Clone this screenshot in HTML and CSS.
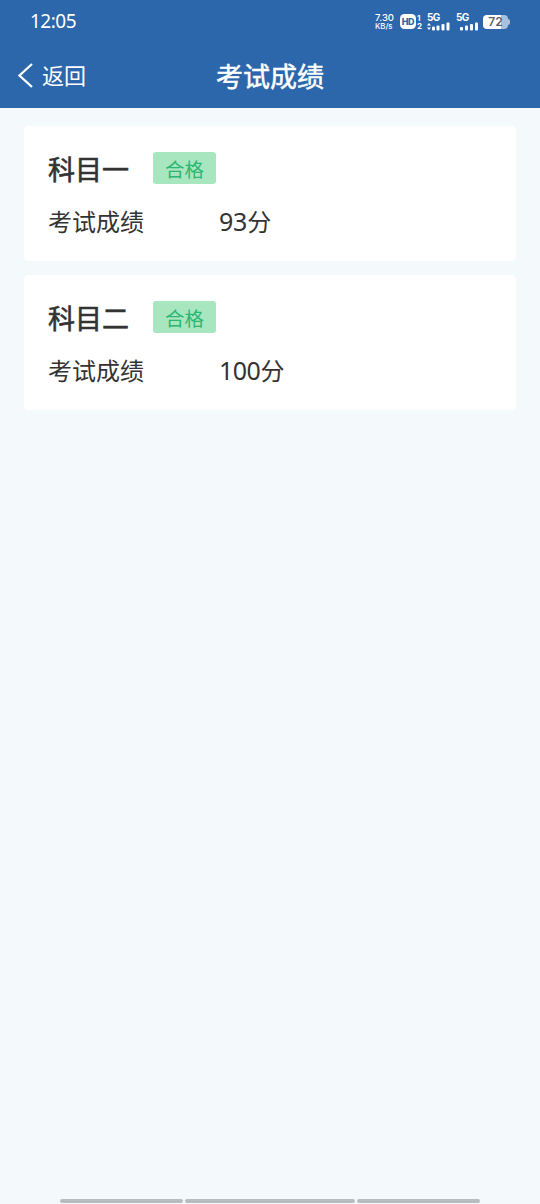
FILE: index.html
```html
<!DOCTYPE html>
<html lang="zh-CN">
<head>
<meta charset="utf-8">
<title>考试成绩</title>
<link rel="stylesheet" href="styles.css">
</head>
<body>
<div class="screen">
  <header class="header">
    <div class="status">
      <span class="time">12:05</span>
      <div class="indicators">
        <div class="speed"><span class="rate">7.30</span><span class="unit">KB/s</span></div>
        <div class="hd"><span class="hd-box">HD</span><span class="sims"><span>1</span><span>2</span></span></div>
        <div class="signal">
          <span class="net">5G</span>
          <svg width="24" height="9" viewBox="0 0 24 9" fill="#fff"><path d="M0 3.600 2 1l2 2.600zM0 5.400 2 8l2-2.600z"/><rect x="5" y="4.500" width="3" height="4" rx="1"/><rect x="9.500" y="3.500" width="3" height="5" rx="1"/><rect x="14.500" y="2" width="3" height="6.500" rx="1"/><rect x="19.500" y=".5" width="3" height="8" rx="1"/></svg>
        </div>
        <div class="signal second">
          <span class="net">5G</span>
          <svg width="24" height="9" viewBox="0 0 24 9" fill="#fff"><rect x="4" y="5" width="3" height="3.500" rx="1"/><rect x="9" y="3.500" width="3" height="5" rx="1"/><rect x="14" y="2" width="3" height="6.500" rx="1"/><rect x="19" y=".5" width="3" height="8" rx="1"/></svg>
        </div>
        <div class="battery"><span class="level">72</span><span class="tip"></span></div>
      </div>
    </div>
    <nav class="nav">
      <a class="back"><svg width="18" height="28" viewBox="0 0 18 28" fill="none" stroke="#fff" stroke-width="2.300"><path d="M15 2 2.500 13.500 15 25"/></svg><span class="back-text">返回</span></a>
      <h1 class="title">考试成绩</h1>
    </nav>
  </header>
  <main class="list">
    <section class="card">
      <div class="subject"><h2 class="name">科目一</h2><span class="tag">合格</span></div>
      <div class="result"><span class="label">考试成绩</span><span class="score">93<span class="fen">分</span></span></div>
    </section>
    <section class="card">
      <div class="subject"><h2 class="name">科目二</h2><span class="tag">合格</span></div>
      <div class="result"><span class="label">考试成绩</span><span class="score hundred">100<span class="fen">分</span></span></div>
    </section>
  </main>
  <footer class="gestures"><span class="bar"></span><span class="bar middle"></span><span class="bar"></span></footer>
</div>
</body>
</html>
```
FILE: styles.css
```css
* { box-sizing: border-box; }
body { margin: 0; font-family: "Noto Sans", "Noto Sans CJK SC", sans-serif; }
h1, h2 { margin: 0; }
svg { display: block; }
.screen { width: 540px; height: 1204px; display: flex; flex-direction: column; background: #f4f9fb; overflow: hidden; }
.header { height: 108px; background: #2c66ab; color: #fff; }
.status { height: 43px; padding: 0 30px; display: flex; align-items: center; justify-content: space-between; }
.time { font-size: 19px; line-height: 24px; letter-spacing: -.5px; padding-bottom: 1px; }
.indicators { display: flex; align-items: center; height: 20px; }
.speed { width: 25px; display: flex; flex-direction: column; font: 500 9.5px/9px Inter, sans-serif; }
.unit { font-size: 7.8px; line-height: 8px; }
.hd { width: 26px; display: flex; align-items: center; gap: 1px; }
.hd-box { width: 16px; height: 15px; border-radius: 4.5px; background: #fff; color: #2c66ab; font: 800 9px/15px Inter, sans-serif; text-align: center; letter-spacing: -.3px; }
.sims { display: flex; flex-direction: column; font: 700 8px/8px Inter, sans-serif; }
.signal { width: 29px; height: 18px; padding-left: 1px; }
.net { display: block; height: 9px; font: 700 10px/9px Inter, sans-serif; letter-spacing: -.6px; }
.second { width: 28px; }
.battery { display: flex; align-items: center; }
.level { width: 25px; height: 14px; border-radius: 4px; background: linear-gradient(90deg, #fff 72%, #a9c1de 72%); color: #575f68; font: 600 12px/14px Inter, sans-serif; text-align: center; }
.tip { width: 2px; height: 6px; border-radius: 0 2px 2px 0; background: #a9c1de; }
.nav { height: 65px; padding: 0 17px; display: grid; grid-template-columns: 1fr auto 1fr; align-items: center; }
.back { display: flex; align-items: center; gap: 7px; font: 22px/32px "Noto Sans CJK SC", sans-serif; }
.back-text { padding-bottom: 3px; }
.title { font: 400 27px/36px "Noto Sans CJK SC", sans-serif; -webkit-text-stroke: .5px #fff; }
.list { flex: 1; padding: 18px 24px; display: flex; flex-direction: column; gap: 14px; }
.card { height: 135px; padding: 26px 24px; border-radius: 5px; background: #fff; color: #333; }
.subject { height: 32px; display: flex; align-items: center; gap: 24px; }
.name { padding-top: 2px; font: 400 27px/32px "Noto Sans CJK SC", sans-serif; -webkit-text-stroke: .6px #333; }
.tag { width: 63px; height: 32px; border-radius: 3px; background: #a8e6c0; color: #2bb673; font: 19.5px/33px "Noto Sans CJK SC", sans-serif; text-align: center; }
.result { display: flex; align-items: center; height: 36px; margin-top: 19px; }
.label { width: 171px; font: 24px/36px "Noto Sans CJK SC", sans-serif; }
.score { font-size: 25px; line-height: 36px; letter-spacing: -.2px; }
.hundred { letter-spacing: -.5px; }
.fen { font-family: "Noto Sans CJK SC", sans-serif; font-size: 24px; }
.gestures { height: 5px; padding: 0 60px; display: flex; gap: 2px; }
.bar { flex: 1; height: 4px; border-radius: 2px; background: #b8bebe; }
.middle { flex: 0 0 170px; }
```
